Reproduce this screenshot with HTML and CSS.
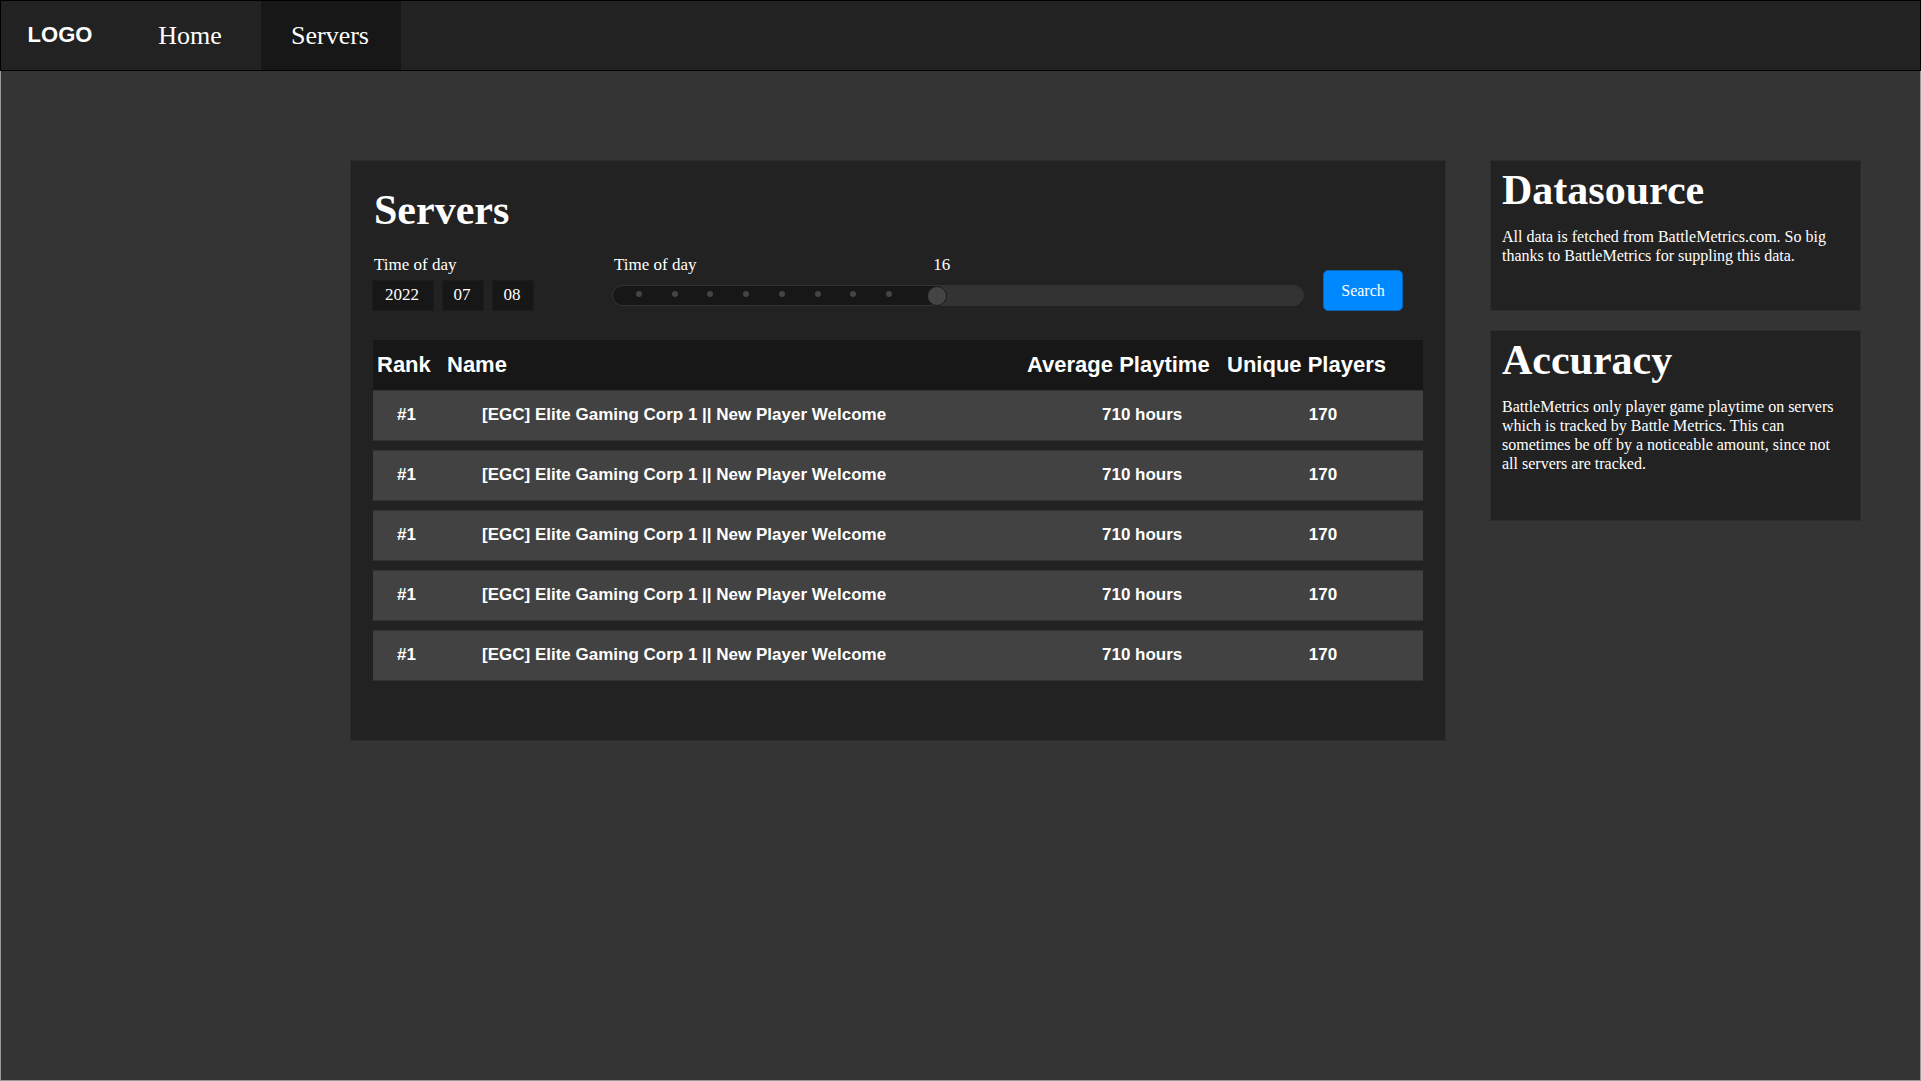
FILE: index.html
```html
<!DOCTYPE html>
<html lang="en">
<head>
  <meta charset="utf-8">
  <meta name="viewport" content="width=device-width, initial-scale=1">
  <title>Servers</title>
  <link rel="stylesheet" href="styles.css">
</head>
<body>
  <header class="navbar">
    <a class="logo" href="#">LOGO</a>
    <nav class="nav-links">
      <a class="nav-link" href="#">Home</a>
      <a class="nav-link active" href="#" aria-current="page">Servers</a>
    </nav>
  </header>

  <main class="page">
    <section class="card servers">
      <h1 class="title">Servers</h1>

      <form class="filters">
        <div class="field">
          <label class="label" for="year">Time of day</label>
          <div class="control">
            <input class="date-part year" id="year" type="text" value="2022">
            <input class="date-part" type="text" value="07" aria-label="Month">
            <input class="date-part" type="text" value="08" aria-label="Day">
          </div>
        </div>
        <div class="field slider-field">
          <label class="label" for="time">Time of day</label>
          <output class="slider-value" for="time">16</output>
          <div class="control">
            <input class="slider" id="time" type="range" min="1" max="33" value="16">
            <div class="ticks" aria-hidden="true">
              <i></i><i></i><i></i><i></i><i></i><i></i><i></i><i></i>
            </div>
          </div>
        </div>
        <button class="search" type="button">Search</button>
      </form>

      <table class="table">
        <thead>
          <tr><th>Rank</th><th>Name</th><th>Average Playtime</th><th>Unique Players</th></tr>
        </thead>
        <tbody>
          <tr><td>#1</td><td>[EGC] Elite Gaming Corp 1 || New Player Welcome</td><td>710 hours</td><td>170</td></tr>
          <tr><td>#1</td><td>[EGC] Elite Gaming Corp 1 || New Player Welcome</td><td>710 hours</td><td>170</td></tr>
          <tr><td>#1</td><td>[EGC] Elite Gaming Corp 1 || New Player Welcome</td><td>710 hours</td><td>170</td></tr>
          <tr><td>#1</td><td>[EGC] Elite Gaming Corp 1 || New Player Welcome</td><td>710 hours</td><td>170</td></tr>
          <tr><td>#1</td><td>[EGC] Elite Gaming Corp 1 || New Player Welcome</td><td>710 hours</td><td>170</td></tr>
        </tbody>
      </table>
    </section>

    <aside class="sidebar">
      <section class="card note">
        <h2 class="title">Datasource</h2>
        <p>All data is fetched from BattleMetrics.com. So big thanks to BattleMetrics for suppling this data.</p>
      </section>
      <section class="card note">
        <h2 class="title">Accuracy</h2>
        <p>BattleMetrics only player game playtime on servers which is tracked by Battle Metrics. This can sometimes be off by a noticeable amount, since not all servers are tracked.</p>
      </section>
    </aside>
  </main>
</body>
</html>
```
FILE: styles.css
```css
:root {
  --bg: #343434;
  --surface: #222;
  --dark: #171717;
  --row: #424242;
  --line: #2c2c2c;
  --serif: "Liberation Serif", "Times New Roman", serif;
  --sans: "Liberation Sans", Arial, sans-serif;
}

* {
  box-sizing: border-box;
}

body {
  margin: 0;
  min-height: 100vh;
  display: flex;
  flex-direction: column;
  background: var(--bg);
  color: #fff;
  font: 16px/19px var(--serif);
}

/* Navigation */
.navbar {
  display: flex;
  height: 71px;
  background: var(--surface);
  border: 1px solid #000;
}

.logo,
.nav-link {
  display: flex;
  align-items: center;
  justify-content: center;
  padding-right: 2px;
  color: #fff;
  text-decoration: none;
}

.logo {
  width: 120px;
  padding-bottom: 2px;
  font: bold 22px/26px var(--sans);
}

.nav-links {
  display: flex;
}

.nav-link {
  width: 140px;
  font-size: 26px;
  line-height: 30px;
}

.nav-link.active {
  background: var(--dark);
}

/* Page layout */
.page {
  flex: 1;
  display: grid;
  grid-template-columns: minmax(0, 1fr) 371px;
  align-items: start;
  gap: 44px;
  padding: 89px 59px 40px 349px;
  border: 1px solid #999;
  border-top: 0;
}

.card {
  background: var(--surface);
  border: 1px solid var(--line);
}

.title {
  margin: 0;
  font-size: 42px;
  line-height: 48px;
}

.servers {
  padding: 25px 22px 59px 21px;
}

.servers .title {
  padding-left: 2px;
}

/* Filters */
.filters {
  display: flex;
  align-items: flex-end;
  margin: 21px 0 29px;
  padding-right: 20px;
}

.field {
  width: 240px;
}

.label {
  display: block;
  padding-left: 2px;
  font-size: 17px;
  line-height: 20px;
}

.control {
  display: flex;
  align-items: center;
  gap: 8px;
  height: 31px;
  margin-top: 5px;
}

.date-part {
  width: 42px;
  height: 31px;
  padding: 0 2px 2px 0;
  border: 1px solid #1c1c1c;
  background: var(--dark);
  color: #fff;
  font: 17px/20px var(--serif);
  text-align: center;
}

.date-part.year {
  width: 62px;
}

.slider-field {
  position: relative;
  flex: 1;
}

.slider-value {
  position: absolute;
  top: 0;
  left: 46%;
  padding-left: 3px;
  font-size: 17px;
  line-height: 20px;
}

.slider {
  appearance: none;
  width: 100%;
  height: 21px;
  margin: 0;
  border: 1px solid #333;
  border-radius: 11px;
  background: #333 linear-gradient(var(--dark), var(--dark)) no-repeat 0 0 / 47% 100%;
}

.slider::-webkit-slider-thumb {
  appearance: none;
  width: 20px;
  height: 20px;
  border: 1px solid #1a1a1a;
  border-radius: 50%;
  background: #444;
}

/* Tick marks drawn over the filled part of the track */
.ticks {
  position: absolute;
  bottom: 14px;
  left: 24px;
  width: 37%;
  display: flex;
  justify-content: space-between;
  pointer-events: none;
}

.ticks i {
  width: 6px;
  height: 6px;
  border-radius: 50%;
  background: #444;
}

.search {
  width: 80px;
  height: 41px;
  margin-left: 19px;
  padding: 0;
  border: 1px solid #0a63b5;
  border-radius: 5px;
  background: #08f;
  color: #fff;
  font: 16px/19px var(--serif);
}

/* Servers table */
.table,
.table thead {
  display: block;
}

.table {
  margin-left: 1px;
}

.table tbody {
  display: grid;
  gap: 9px;
}

.table tr {
  display: grid;
  grid-template-columns: 70px minmax(0, 1fr) 200px 200px;
  align-items: center;
  font-family: var(--sans);
  font-weight: bold;
}

.table thead tr {
  height: 50px;
  background: var(--dark);
  font-size: 22px;
  line-height: 26px;
}

.table tbody tr {
  height: 51px;
  padding-bottom: 2px;
  background: var(--row);
  border: solid #333;
  border-width: 1px 0;
  font-size: 17px;
  line-height: 20px;
}

.table th {
  padding: 0 0 0 4px;
  text-align: left;
}

.table td {
  padding: 0;
}

.table td:nth-child(1) {
  padding-left: 24px;
}

.table td:nth-child(2) {
  padding-left: 39px;
}

.table td:nth-child(3) {
  padding-left: 79px;
}

.table td:nth-child(4) {
  text-align: center;
}

/* Sidebar */
.sidebar {
  display: grid;
  gap: 19px;
}

.note {
  padding: 5px 20px 45px 11px;
}

.note:last-child {
  padding-bottom: 47px;
}

.note p {
  margin: 13px 0 0;
}
```
